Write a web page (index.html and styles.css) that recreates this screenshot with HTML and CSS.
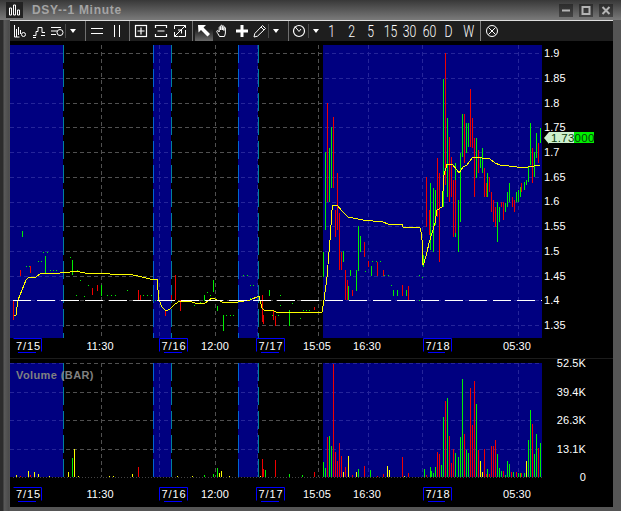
FILE: index.html
```html
<!DOCTYPE html>
<html lang="en">
<head>
    <meta charset="UTF-8">
    <title>DSY--1 Minute</title>
    <link rel="stylesheet" href="styles.css">
</head>
<body>
<div class="window">
    <div class="titlebar">
        <div class="app-icon">
            <svg viewBox="0 0 17 16" width="17" height="16"><path class="icon-thin" d="M3.500 13V6h2v7zM7.500 13V3h2v10zM11.500 13V8h2v5z"/></svg>
        </div>
        <span class="title">DSY--1 Minute</span>
        <div class="win-buttons">
            <div class="win-btn"><svg viewBox="0 0 14 13" width="14" height="13"><path class="win-icon" d="M3 6.500h8"/></svg></div>
            <div class="win-btn"><svg viewBox="0 0 14 13" width="14" height="13"><rect class="win-icon-box" x="3.500" y="3" width="7" height="7"/></svg></div>
            <div class="win-btn"><svg viewBox="0 0 14 13" width="14" height="13"><path class="win-icon" d="M3.500 3l7 7M10.500 3l-7 7"/></svg></div>
        </div>
    </div>
    <div class="frame">
        <div class="toolbar">
            <div class="tool"><svg viewBox="0 0 14 14" width="14" height="14"><path class="icon-thin" d="M1.500 1v12h5M3.500 5v8M5.500 3v8M7.500 6v4"/><circle class="icon-thin" cx="10.500" cy="10.500" r="2"/></svg></div>
            <div class="tool"><svg viewBox="0 0 14 14" width="14" height="14"><path class="icon-thin" d="M1 11.500h3v-4h2v-4h4v5h3M1 13.500h3M9 11.500h4"/></svg></div>
            <div class="tool tool-narrow"><svg viewBox="0 0 14 14" width="14" height="14"><path class="icon-thin" d="M1 3.500h10M1 7h6M1 10.500h5"/><circle class="icon-thin" cx="10" cy="8.500" r="3"/></svg></div>
            <div class="sep sep-short"></div>
            <div class="tool tool-drop"><span class="drop"></span></div>
            <div class="sep sep-after-drop"></div>
            <div class="tool tool-wide"><svg viewBox="0 0 14 14" width="14" height="14"><path class="icon-thin" d="M1 4.500h12M1 9.500h12"/></svg></div>
            <div class="tool"><svg viewBox="0 0 14 14" width="14" height="14"><path class="icon-thin" d="M4.500 1v12M9.500 1v12"/></svg></div>
            <div class="sep sep-gap"></div>
            <div class="tool tool-wide"><svg viewBox="0 0 14 14" width="14" height="14"><rect class="icon" x="1.500" y="1.500" width="11" height="11"/><path class="icon" d="M3.500 7h7M7 3.500v7"/></svg></div>
            <div class="tool"><svg viewBox="0 0 14 14" width="14" height="14"><path class="icon" d="M1.500 4V1.500h11V4M1.500 10v2.500h11V10M3.500 7h7"/></svg></div>
            <div class="tool"><svg viewBox="0 0 14 14" width="14" height="14"><path class="icon-thin" d="M1.500 5V1.500h7M12.500 6v6.500h-7M1.500 12.500l11-11M1.500 8v4.500H5M8 1.500h4.500V4M5 6h3.500v3.500"/></svg></div>
            <div class="sep sep-gap"></div>
            <div class="tool tool-active"><svg viewBox="0 0 14 14" width="14" height="14"><path class="icon-fill" d="M1 1h8L6.500 3.500 13 10l-2.500 2.500L4 6 1.500 8.500z"/></svg></div>
            <div class="tool"><svg viewBox="0 0 14 14" width="14" height="14"><path class="icon-thin" d="M3.500 12.500C2.500 10.500 1 8.500.8 7.500c-.2-1 1-1.300 1.700-.5l.7 1V3.500c0-1 1.500-1 1.500 0V6V2c0-1 1.600-1 1.600 0v4V2.500c0-1 1.600-1 1.600 0V6.500V4c0-1 1.500-1 1.500 0v5c0 1.500-.8 2.500-1 3.500z"/></svg></div>
            <div class="tool"><svg viewBox="0 0 14 14" width="14" height="14"><path class="icon-bold" d="M1 7h12M7 1v12"/></svg></div>
            <div class="tool tool-narrow"><svg viewBox="0 0 14 14" width="14" height="14"><path class="icon-thin" d="M1 13l.8-3.500L9.500 1.500l3 3-8 7.700zM8 3l3 3"/></svg></div>
            <div class="sep sep-short"></div>
            <div class="tool tool-drop"><span class="drop"></span></div>
            <div class="sep sep-after-drop"></div>
            <div class="tool tool-clock"><svg viewBox="0 0 14 14" width="14" height="14"><circle class="icon" cx="7" cy="7" r="5.500"/><path class="icon-thin" d="M3 2.500L7 7.500l2-2.500"/></svg></div>
            <div class="sep sep-short"></div>
            <div class="tool tool-drop tool-drop-last"><span class="drop"></span></div>
            <div class="tool tool-num"><span class="num">1</span></div>
            <div class="tool tool-num"><span class="num">2</span></div>
            <div class="tool tool-num"><span class="num">5</span></div>
            <div class="tool tool-num"><span class="num">15</span></div>
            <div class="tool tool-num"><span class="num">30</span></div>
            <div class="tool tool-num"><span class="num">60</span></div>
            <div class="tool tool-num"><span class="num">D</span></div>
            <div class="tool tool-num"><span class="num">W</span></div>
            <div class="sep sep-end"></div>
            <div class="tool tool-wide"><svg viewBox="0 0 14 14" width="14" height="14"><circle class="icon-thin" cx="7" cy="7" r="5.500"/><path class="icon-thin" d="M3.500 3.500l7 7M10.500 3.500l-7 7"/></svg></div>
        </div>

        <!-- coordinates in the chart are page pixels, hence the viewBox offset -->
        <svg class="chart" viewBox="10 41 603 466" width="603" height="466">
            <defs>
                <clipPath id="priceBlue">
                    <rect x="10" y="45" width="53" height="293"/><rect x="153" y="45" width="18" height="293"/>
                    <rect x="238" y="45" width="20" height="293"/><rect x="323" y="45" width="219" height="293"/>
                </clipPath>
                <clipPath id="volumeBlue">
                    <rect x="10" y="363" width="53" height="114"/><rect x="153" y="363" width="18" height="114"/>
                    <rect x="238" y="363" width="20" height="114"/><rect x="323" y="363" width="219" height="114"/>
                </clipPath>
                <path id="priceGrid" d="M10 53.500H542M10 78.500H542M10 103.500H542M10 127.500H542M10 152.500H542M10 177.500H542M10 202.500H542M10 226.500H542M10 251.500H542M10 276.500H542M10 300.500H542M10 325.500H542M101.500 45V338M159.500 45V338M215.500 45V338M257.500 45V338M318.500 45V338M368.500 45V338M422.500 45V338M518.500 45V338"/>
                <path id="volumeGrid" d="M10 363.500H542M10 392.500H542M10 420.500H542M10 449.500H542M101.500 363V477M159.500 363V477M215.500 363V477M257.500 363V477M318.500 363V477M368.500 363V477M422.500 363V477M518.500 363V477"/>
            </defs>

            <!-- price panel -->
            <use href="#priceGrid" class="grid grid-dark"/>
            <g class="session">
                <rect x="10" y="45" width="53" height="293"/><rect x="153" y="45" width="18" height="293"/>
                <rect x="238" y="45" width="20" height="293"/><rect x="323" y="45" width="219" height="293"/>
            </g>
            <use href="#priceGrid" class="grid grid-blue" clip-path="url(#priceBlue)"/>
            <path class="edge edge-teal" d="M63.500 45V338M171.500 45V338M258.500 45V338"/>
            <path class="edge edge-blue" d="M153.500 45V338M238.500 45V338"/>

            <path class="bars up" d="M22 231V237M45 256V274M72 260V275M101 285V296M204 295V301M213 280V292M217 306V311M223 315V331M269 290V296M289 310V326M323 252V277M325 152V230M329 148V202M331 127V188M343 251V262M348 286V300M350 270V276M356 270V291M358 226V271M360 236V252M371 266V276M393 290V296M397 290V296M406 290V296M423 255V267M430 183V250M433 188V252M435 190V225M443 79V207M447 118V197M455 163V237M458 200V252M460 153V222M462 114V157M466 123V153M468 123V147M476 138V178M480 158V168M482 148V173M487 173V197M497 202V242M499 207V222M505 203V212M507 192V207M509 183V202M516 192V202M518 190V202M520 187V197M524 182V190M526 180V185M528 167V182M530 123V165M534 152V177M536 133V158M540 128V143"/>
            <path class="bars down" d="M13 300V320M20 270V276M30 266V273M92 288V295M97 285V291M138 290V300M140 295V300M165 310V316M171 295V300M175 275V300M180 300V311M262 295V322M263 315V324M273 310V320M275 316V326M314 307V310M327 103V202M333 117V188M335 210V237M337 173V230M339 213V270M341 252V270M345 270V300M347 280V300M352 290V296M364 242V257M368 261V267M377 262V276M383 270V276M402 285V296M408 286V300M426 177V227M429 210V235M437 158V217M439 173V262M445 53V185M449 137V202M451 157V197M453 180V237M455 180V233M464 114V163M470 89V147M472 118V148M474 138V197M478 150V173M484 168V197M486 183V197M489 177V192M491 192V212M493 200V222M495 207V227M501 202V207M503 202V220M512 197V207M514 200V212M521 183V192M532 148V183M538 143V163"/>
            <path class="bars dots" d="M26 266h1M29 266h1M38 261h1M41 261h1M43 252h1M47 252h1M50 270h1M53 270h1M56 270h1M70 257h1M77 270h1M80 280h1M88 285h1M76 295h1M84 296h1M107 295h1M111 295h1M115 295h1M127 290h1M143 295h1M147 295h1M151 295h1M155 300h1M207 292h1M210 295h1M194 305h1M200 302h1M243 275h1M247 275h1M250 285h1M253 285h1M226 315h1M230 315h1M233 315h1M272 315h1M278 315h1M280 305h1M280 295h1M292 303h1M300 318h1M303 310h1M306 310h1M309 310h1M250 298h1M365 271h1M372 261h1M376 261h1M380 261h1M384 275h1M388 275h1M391 285h1M419 275h1M422 277h1M419 300h1"/>
            <path class="price-line" d="M14 315L16 315 18 300 22 290 26 280 29 277 36 277 40 274 60 273 70 272 75 271 85 273 110 274 128 274 138 276 150 279 157 279 159 300 162 307 166 311 170 309 175 304 180 301 192 302 198 304 205 303 212 298 215 299 222 302 238 302 250 300 259 296 262 308 264 310 272 310 276 312 285 313 310 312 322 312 324 300 327 277 330 240 332 210 333 205 337 205 343 212 348 217 363 220 383 222 388 224 402 224 403 227 420 228 421 232 422 240 423 265 424 263 427 252 429 243 435 223 437 210 442 207 444 175 447 164 452 164 457 170 459 173 463 167 467 165 473 157 490 159 495 163 500 165 517 167 528 167 540 165"/>
            <path class="level-line" d="M13 300.500H542"/>

            <text class="axis" x="544" y="57">1.9</text>
            <text class="axis" x="544" y="82">1.85</text>
            <text class="axis" x="544" y="107">1.8</text>
            <text class="axis" x="544" y="131">1.75</text>
            <text class="axis" x="544" y="156">1.7</text>
            <text class="axis" x="544" y="181">1.65</text>
            <text class="axis" x="544" y="205">1.6</text>
            <text class="axis" x="544" y="230">1.55</text>
            <text class="axis" x="544" y="255">1.5</text>
            <text class="axis" x="544" y="280">1.45</text>
            <text class="axis" x="544" y="304">1.4</text>
            <text class="axis" x="544" y="329">1.35</text>

            <path class="tag-arrow" d="M544 138l5-6v12z"/>
            <rect class="tag-pale" x="549" y="132" width="25" height="11"/>
            <rect class="tag-green" x="574" y="132" width="20" height="11"/>
            <text class="tag-text" x="551" y="142">1.73000</text>

            <text class="axis axis-mid" x="100" y="350">11:30</text>
            <text class="axis axis-mid" x="215" y="350">12:00</text>
            <text class="axis axis-mid" x="317" y="350">15:05</text>
            <text class="axis axis-mid" x="367" y="350">16:30</text>
            <text class="axis axis-mid" x="517" y="350">05:30</text>

            <path class="date-box" d="M13.500 338.500H41.500V351.500M18 352.500H36M159.500 351.500V338.500H187.500V351.500M164 352.500H182M256.500 351.500V338.500H284.500V351.500M261 352.500H279M423.500 351.500V338.500H451.500V351.500M428 352.500H445"/>
            <text class="axis axis-date" x="28.500" y="350">7/15</text>
            <text class="axis axis-date" x="174" y="350">7/16</text>
            <text class="axis axis-date" x="271" y="350">7/17</text>
            <text class="axis axis-date" x="438" y="350">7/18</text>

            <path class="panel-rule" d="M10 358.500H613"/>

            <!-- volume panel -->
            <use href="#volumeGrid" class="grid grid-dark"/>
            <g class="session">
                <rect x="10" y="363" width="53" height="114"/><rect x="153" y="363" width="18" height="114"/>
                <rect x="238" y="363" width="20" height="114"/><rect x="323" y="363" width="219" height="114"/>
            </g>
            <use href="#volumeGrid" class="grid grid-blue" clip-path="url(#volumeBlue)"/>
            <path class="edge edge-teal" d="M63.500 363V477M171.500 363V477M258.500 363V477"/>
            <path class="edge edge-blue" d="M153.500 363V477M238.500 363V477"/>
            <path class="baseline" d="M13 477.500H542"/>
            <text class="volume-title" x="16" y="379">Volume (BAR)</text>

            <path class="bars up" d="M72 458V477M204 475V477M213 474V477M217 468V477M265 470V477M289 474V477M302 475V477M323 462V477M325 468V477M329 436V477M331 446V477M358 469V477M370 470V477M424 469V477M430 467V477M431 471V477M433 473V477M435 467V477M441 465V477M443 417V477M447 398V477M455 453V477M458 457V477M460 437V477M462 379V477M466 450V477M468 453V477M476 404V477M487 469V477M497 454V477M499 468V477M501 471V477M505 475V477M507 461V477M509 464V477M513 472V477M518 473V477M520 473V477M524 473V477M528 440V477M530 410V477M534 454V477M536 434V477M540 443V477"/>
            <path class="bars down" d="M20 476V477M30 475V477M138 467V477M262 459V477M263 469V477M275 460V477M314 472V477M327 437V477M333 364V477M335 452V477M337 461V477M339 443V477M341 456V477M345 467V477M352 475V477M364 466V477M377 476V477M383 474V477M402 457V477M408 473V477M426 475V477M437 452V477M439 454V477M445 401V477M449 436V477M451 463V477M453 449V477M464 434V477M470 388V477M472 425V477M474 381V477M478 450V477M484 449V477M486 474V477M489 474V477M491 446V477M493 446V477M495 440V477M503 471V477M511 472V477M516 472V477M521 473V477M532 424V477M538 448V477"/>
            <path class="bars flat" d="M16 475V477M28 471V477M34 472V477M38 474V477M49 476V477M68 472V477M74 449V477M78 476V477M109 476V477M113 476V477M132 474V477M177 476V477M192 476V477M219 473V477M221 471V477M229 476V477M260 476V477M343 472V477M348 456V477M356 472V477M387 466V477M389 470V477M404 476V477M480 461V477M482 472V477M526 461V477"/>

            <text class="axis axis-end" x="586" y="367">52.5K</text>
            <text class="axis axis-end" x="586" y="396">39.4K</text>
            <text class="axis axis-end" x="586" y="424">26.3K</text>
            <text class="axis axis-end" x="586" y="453">13.1K</text>
            <text class="axis axis-end" x="586" y="481">0</text>

            <text class="axis axis-mid" x="100" y="498">11:30</text>
            <text class="axis axis-mid" x="215" y="498">12:00</text>
            <text class="axis axis-mid" x="317" y="498">15:05</text>
            <text class="axis axis-mid" x="367" y="498">16:30</text>
            <text class="axis axis-mid" x="517" y="498">05:30</text>

            <path class="date-box" d="M13.500 487.500H41.500V500.500M18 501.500H36M159.500 500.500V487.500H187.500V500.500M164 501.500H182M256.500 500.500V487.500H284.500V500.500M261 501.500H279M423.500 500.500V487.500H451.500V500.500M428 501.500H445"/>
            <text class="axis axis-date" x="28.500" y="498">7/15</text>
            <text class="axis axis-date" x="174" y="498">7/16</text>
            <text class="axis axis-date" x="271" y="498">7/17</text>
            <text class="axis axis-date" x="438" y="498">7/18</text>
        </svg>
    </div>
</div>
</body>
</html>
```
FILE: styles.css
```css
body {
    margin: 0;
    background: #555;
    font-family: "Liberation Sans", Arial, sans-serif;
}
.window {
    width: 621px;
    height: 511px;
    overflow: hidden;
    background: linear-gradient(to right, #2c2c2c 0, #2c2c2c 3px, #5a5a5a 4px, #4a4a4a 9px, #555 10px);
}

/* title bar */
.titlebar {
    height: 20px;
    display: flex;
    align-items: center;
    padding: 0 8px 0 6px;
    background: linear-gradient(to bottom, #383838, #7a7a7a);
}
.app-icon {
    width: 17px;
    height: 16px;
    margin-right: 9px;
    background: #222;
    display: flex;
}
.title {
    color: #a4a4a4;
    font-size: 12px;
    font-weight: bold;
    letter-spacing: 0.7px;
}
.win-buttons {
    margin-left: auto;
    display: flex;
    gap: 6px;
}
.win-btn {
    width: 14px;
    height: 13px;
    background: linear-gradient(to bottom, #2c2c2c, #444);
    display: flex;
}
.win-icon {
    fill: none;
    stroke: #b4b4b4;
    stroke-width: 2;
}
.win-icon-box {
    fill: none;
    stroke: #b4b4b4;
    stroke-width: 2;
}

/* frame round toolbar and chart */
.frame {
    margin: 0 8px 4px 10px;
}
.toolbar {
    height: 20px;
    display: flex;
    border-top: 1px solid #ddd;
    background: #1e1e1e;
}
.tool {
    width: 19px;
    flex: none;
    display: flex;
    align-items: center;
    justify-content: center;
}
.tool-narrow {
    width: 17px;
}
.tool-wide {
    width: 21px;
}
.tool-clock {
    width: 19px;
}
.tool-drop {
    width: 14px;
}
.tool-drop-last {
    width: 13px;
}
.tool-num {
    width: 19.5px;
}
.tool-active {
    width: 18px;
    margin-left: 2px;
    background: linear-gradient(to bottom, #1e1e1e 40%, #6a6a6a);
}
.sep {
    width: 1px;
    flex: none;
    background: #707070;
}
.sep-short {
    height: 14px;
    align-self: center;
    background: #4a4a4a;
}
.sep-after-drop {
    margin-left: 5px;
}
.sep-gap {
    margin-left: 3px;
}
.sep-end {
    margin-left: 2px;
    background: #808080;
}
.drop {
    width: 0;
    height: 0;
    border-style: solid;
    border-width: 4px 3px 0 3px;
    border-color: #fff transparent transparent transparent;
}
.num {
    color: #fff;
    font-family: Roboto, "Liberation Sans", sans-serif;
    font-size: 17px;
    font-weight: 300;
    transform: scaleX(0.72);
    white-space: nowrap;
}
.icon, .icon-thin, .icon-bold {
    fill: none;
    stroke: #fff;
}
.icon {
    stroke-width: 1.2;
}
.icon-thin {
    stroke-width: 1;
}
.icon-bold {
    stroke-width: 3;
}
.icon-fill {
    fill: #fff;
}

/* chart */
.chart {
    display: block;
    background: #000;
}
.session {
    fill: #000080;
}
.grid {
    fill: none;
    stroke-width: 1;
    stroke-dasharray: 4 3;
}
.grid-dark {
    stroke: #505050;
}
.grid-blue {
    stroke: #25259a;
}
.edge {
    fill: none;
    stroke-dasharray: 18 6;
}
.edge-teal {
    stroke: #007f9f;
}
.edge-blue {
    stroke: #0064d2;
}
.bars {
    fill: none;
    stroke-width: 1;
    shape-rendering: crispEdges;
}
.up, .dots {
    stroke: #00f000;
}
.down {
    stroke: #f00000;
}
.flat {
    stroke: #ffff00;
}
.price-line {
    fill: none;
    stroke: #ffff00;
    stroke-width: 1;
    shape-rendering: crispEdges;
}
.level-line {
    fill: none;
    stroke: #fff;
    stroke-dasharray: 18 6;
}
.baseline {
    fill: none;
    stroke: #444;
    stroke-dasharray: 1 2;
}
.panel-rule {
    fill: none;
    stroke: #1c1c1c;
}
.axis {
    fill: #fff;
    font-size: 11px;
    letter-spacing: 0.1px;
}
.axis-mid {
    text-anchor: middle;
}
.axis-end {
    text-anchor: end;
}
.axis-date {
    text-anchor: middle;
    letter-spacing: 0.9px;
}
.date-box {
    fill: none;
    stroke: #0000ff;
}
.volume-title {
    fill: #808080;
    font-size: 11px;
    font-weight: bold;
    letter-spacing: 0.4px;
}
.tag-arrow, .tag-pale {
    fill: #cdf0cd;
}
.tag-green {
    fill: #00f000;
}
.tag-text {
    fill: #0a400a;
    font-size: 11.500px;
    letter-spacing: 0.3px;
}
```
